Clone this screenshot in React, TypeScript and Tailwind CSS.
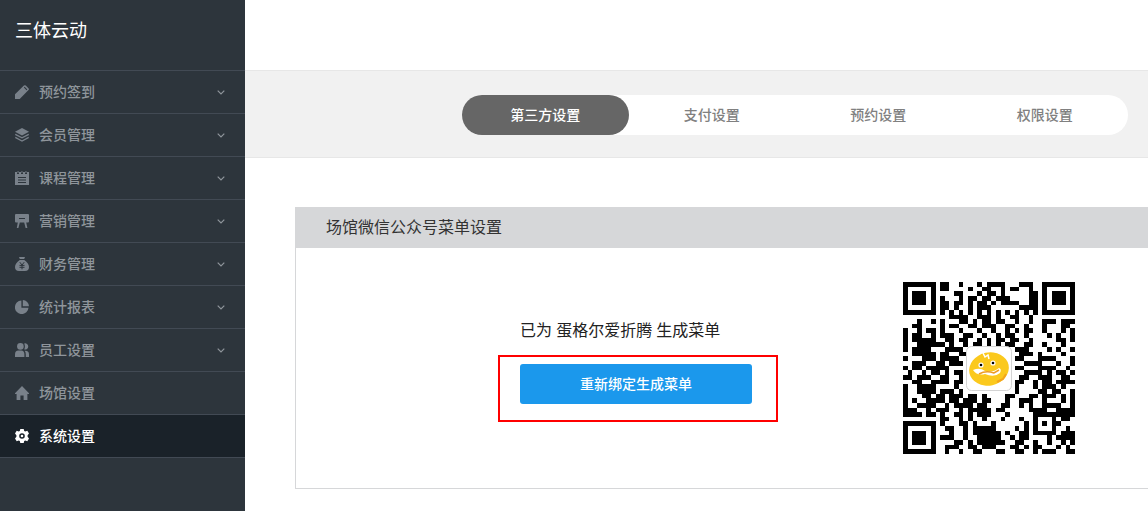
import { useState, type ReactNode } from "react";
import clsx from "clsx";

type MenuItem = {
  label: string;
  icon: ReactNode;
  expandable: boolean;
};

const menu: MenuItem[] = [
  {
    label: "预约签到",
    expandable: true,
    icon: (
      <path
        fillRule="evenodd"
        d="M0 14V9.3L8.9.6Q9.8-.3 10.8.6L13.4 3.2Q14.4 4.2 13.5 5.1L4.7 14ZM8.9 2.6L9.7 1.8L12.3 4.4L11.5 5.2Z"
      />
    ),
  },
  {
    label: "会员管理",
    expandable: true,
    icon: (
      <>
        <path d="M7 0L14 3.7L7 7.4L0 3.7Z" />
        <path
          fill="none"
          stroke="currentColor"
          strokeWidth="1.3"
          d="M.3 6.3L7 9.8L13.7 6.3M.3 9.4L7 13L13.7 9.4"
        />
      </>
    ),
  },
  {
    label: "课程管理",
    expandable: true,
    icon: (
      <path
        fillRule="evenodd"
        d="M0 1H2V3H4V1H6V3H8V1H10V3H12V1H14V14H0ZM3 6V7H11V6ZM3 8.5V9.5H11V8.5ZM3 11V12H11V11ZM2.6 0H3.5V2H2.6ZM6.5 0H7.4V2H6.5ZM10.5 0H11.4V2H10.5Z"
      />
    ),
  },
  {
    label: "营销管理",
    expandable: true,
    icon: (
      <path
        fillRule="evenodd"
        d="M1 0H13Q14 0 14 1V7.5Q14 8.5 13 8.5H11.2L12.4 14H10.6L9.2 8.5H4.8L3.4 14H1.8L2.8 8.5H1Q0 8.5 0 7.5V1Q0 0 1 0ZM4 4V5H10V4Z"
      />
    ),
  },
  {
    label: "财务管理",
    expandable: true,
    icon: (
      <>
        <path d="M4 0H10L9.2 2H4.8ZM4.7 3H9.3Q14 6.5 14 10Q14 14 10 14H4Q0 14 0 10Q0 6.5 4.7 3Z" />
        <path
          fill="none"
          stroke="#2d353c"
          strokeWidth="1"
          d="M4.8 5.2L7 8L9.2 5.2M4.5 8.4H9.5M4.5 10.3H9.5M7 8V12.3"
        />
      </>
    ),
  },
  {
    label: "统计报表",
    expandable: true,
    icon: <path d="M6.4.5V7.7H13.5A6.8 6.8 0 1 1 6.4.5ZM7.8 0A6.3 6.3 0 0 1 14 6.3H7.8Z" />,
  },
  {
    label: "员工设置",
    expandable: true,
    icon: (
      <>
        <circle cx="5.4" cy="3.4" r="3.3" />
        <path d="M0 14V11.5Q0 7.6 3.4 7.6H6.2Q9.4 7.6 9.4 11.5V14Z" />
        <path d="M9.2.5A3.1 3.1 0 1 1 9.2 6.4Q10.6 3.4 9.2.5ZM9.6 7.8Q14 7.4 14 11.5V14H10.8V11.5Q10.8 9 9.6 7.8Z" />
      </>
    ),
  },
  {
    label: "场馆设置",
    expandable: false,
    icon: <path d="M7 0L14 7.2V8H12.4V14H8.6V9.4H5.4V14H1.6V8H0V7.2Z" />,
  },
  {
    label: "系统设置",
    expandable: false,
    icon: (
      <path
        fillRule="evenodd"
        d="M5.3 0H8.7L9.2 1.9L10.3 2.5L12.3 1.7L14 4.6L12.6 6.2V7.8L14 9.4L12.3 12.3L10.3 11.5L9.2 12.1L8.7 14H5.3L4.8 12.1L3.7 11.5L1.7 12.3L0 9.4L1.4 7.8V6.2L0 4.6L1.7 1.7L3.7 2.5L4.8 1.9ZM7 4.2A2.8 2.8 0 1 0 7 9.8A2.8 2.8 0 1 0 7 4.2ZM7 5.7A1.3 1.3 0 1 1 7 8.3A1.3 1.3 0 1 1 7 5.7Z"
      />
    ),
  },
];

const tabs = ["第三方设置", "支付设置", "预约设置", "权限设置"];

// one string per row, # is a dark module
const qrRows = [
  "#######.##..#...#.####...###..#######",
  "#.....#.##....#..##..#.##..#..#.....#",
  "#.###.#....##...#.##.#.....##.#.###.#",
  "#.###.#.#...#.##.##.###....##.#.###.#",
  "#.###.#.##.##.#.##.#.####..##.#.###.#",
  "#.....#.##.#..#.###......####.#.....#",
  "#######.#.#.#.#.#.#.#.#.#.#.#.#######",
  "..........####..###.#..##..#.........",
  "...#..#.#...##.#.##.##..#..#..###.###",
  "..##....#.##..##.###..##..#...#...##.",
  "#..#.##.#...#...#..#..#.#.##..#...#.#",
  "#.##..#.###..##..#..#.##..#....#.#..#",
  "#.#####..##.##..#.#.##.##..#.....##.#",
  "#..######.#..#.##.#.#.##..##..#...#..",
  "#.####...####...........###....#.#..#",
  "..#####.##..##...........###.#....#..",
  "#...###.####............##...####...#",
  "..###..##.###.............####...#..#",
  "#.##.#####..............##...####..#.",
  ".#..#.##.#.##.............####.#.##.#",
  "##.###..##..#............##..###..##.",
  "..##..####.##...........##..#.##.####",
  "#..####....#............#...#.###.#..",
  "#..####.###.#...........#....##.##..#",
  "#...##.##.###.##.#....##...##.###.#.#",
  "#.#..####.##.###.##...#..###..#...#.#",
  "#..####..#.####.##...##..#.#..####..#",
  "###..#.###..#.#####.##.....####..####",
  "####.##.#..##.#.###...#.....#########",
  "........##..#.#..#...#...#..#...#.##.",
  "#######.#...##.#...#......#.#.#.##...",
  "#.....#..##..#.#####....#.#.#...#..#.",
  "#.###.#...#..#.######.#..##.#####.###",
  "#.###.#.###..#..#####..#.##....#.####",
  "#.###.#....##.#.######..##..#..#..#.#",
  "#.....#..###..##.###...##.#.##...#.#.",
  "#######..#..#..##...##..##..#.###..##",
];

const qrPath = qrRows
  .map((row, y) => [...row].map((cell, x) => (cell === "#" ? `M${x} ${y}h1v1h-1z` : "")).join(""))
  .join("");

function Chevron() {
  return (
    <svg className="h-[5px] w-2" viewBox="0 0 8 5" fill="none" stroke="currentColor" aria-hidden="true">
      <path d="M.7.7L4 4L7.3.7" strokeWidth="1.2" />
    </svg>
  );
}

function QrCode() {
  return (
    <svg className="h-[172px] w-[172px] shrink-0" viewBox="0 0 172 172" role="img" aria-label="微信公众号二维码">
      <path d={qrPath} transform="scale(4.6486)" shapeRendering="crispEdges" />
      <rect x="63.5" y="64.5" width="45" height="44" rx="5" fill="#fff" stroke="#d4d4d4" />
      <ellipse cx="86" cy="87" rx="20" ry="16.5" fill="#fbc91d" transform="rotate(-12 86 87)" />
      <path d="M94 100l6-3 3-5" fill="none" stroke="#f3a51c" strokeWidth="2" />
      <path d="M70 88Q77 85 82 89Q90 91 96 86Q99 87 97 91Q91 96 82 92Q74 94 70 88Z" fill="#fff" />
      <path d="M76 92Q83 88 91 91L96 88" fill="none" stroke="#ee9c25" strokeWidth="1.5" />
      <path d="M80 71l2 4 3-2 1 4" fill="none" stroke="#fff" strokeWidth="1.5" />
      <circle cx="78" cy="83" r="2.6" fill="#fff" />
      <circle cx="90" cy="81" r="2.6" fill="#fff" />
      <circle cx="78" cy="83" r="1.3" />
      <circle cx="90" cy="81" r="1.3" />
    </svg>
  );
}

function Sidebar() {
  const [active, setActive] = useState("系统设置");

  return (
    <aside className="w-[245px] shrink-0 bg-[#2d353c]">
      <div className="h-[70px] px-[15px] pt-4 text-lg leading-7 text-white">三体云动</div>
      <nav className="border-b border-[#424a54]">
        {menu.map((item) => (
          <a
            key={item.label}
            href="#"
            onClick={() => setActive(item.label)}
            className={clsx(
              "flex h-[43px] items-center border-t border-[#424a54] pr-5 pl-[15px] text-sm font-medium",
              active === item.label ? "bg-[#1a2229] text-white" : "text-[#8f959b]"
            )}
          >
            <svg
              className={clsx(
                "mr-2.5 h-3.5 w-3.5",
                active === item.label ? "text-white" : "text-[#79818a]"
              )}
              viewBox="0 0 14 14"
              fill="currentColor"
              aria-hidden="true"
            >
              {item.icon}
            </svg>
            <span className="flex-1">{item.label}</span>
            {item.expandable && <Chevron />}
          </a>
        ))}
      </nav>
    </aside>
  );
}

export default function App() {
  const [tab, setTab] = useState(tabs[0]);

  return (
    <div className="flex min-h-screen bg-white font-['Noto_Sans','Noto_Sans_CJK_SC',sans-serif]">
      <Sidebar />

      <main className="min-w-0 flex-1 pt-[70px]">
        <div className="flex justify-end border-y border-[#e7e7e7] bg-[#f1f1f1] pt-6 pr-5 pb-[22px]">
          <div className="grid w-full max-w-[666px] grid-cols-4 rounded-full bg-white" role="tablist">
            {tabs.map((name) => (
              <button
                key={name}
                type="button"
                role="tab"
                aria-selected={tab === name}
                onClick={() => setTab(name)}
                className={clsx(
                  "h-10 rounded-full text-sm font-medium",
                  tab === name ? "bg-[#666] text-white" : "text-[#808080]"
                )}
              >
                {name}
              </button>
            ))}
          </div>
        </div>

        <section className="mt-[49px] ml-[50px] border-b border-l border-[#d6d7d9]">
          <h2 className="bg-[#d6d7d9] pl-[30px] text-base leading-[41px] text-[#333]">
            场馆微信公众号菜单设置
          </h2>
          <div className="flex items-start justify-between py-[34px] pr-[73px] pl-[202px]">
            <div className="mt-9 w-[280px] shrink-0">
              <p className="pl-[22px] text-base leading-6 text-[#222]">已为 蛋格尔爱折腾 生成菜单</p>
              <div className="mt-[13px] border-2 border-[#f00] px-5 pt-[7px] pb-4">
                <button
                  type="button"
                  className="block h-10 w-[232px] rounded-[3px] bg-[#1b98ec] text-sm font-medium text-white"
                >
                  重新绑定生成菜单
                </button>
              </div>
            </div>
            <QrCode />
          </div>
        </section>
      </main>
    </div>
  );
}
